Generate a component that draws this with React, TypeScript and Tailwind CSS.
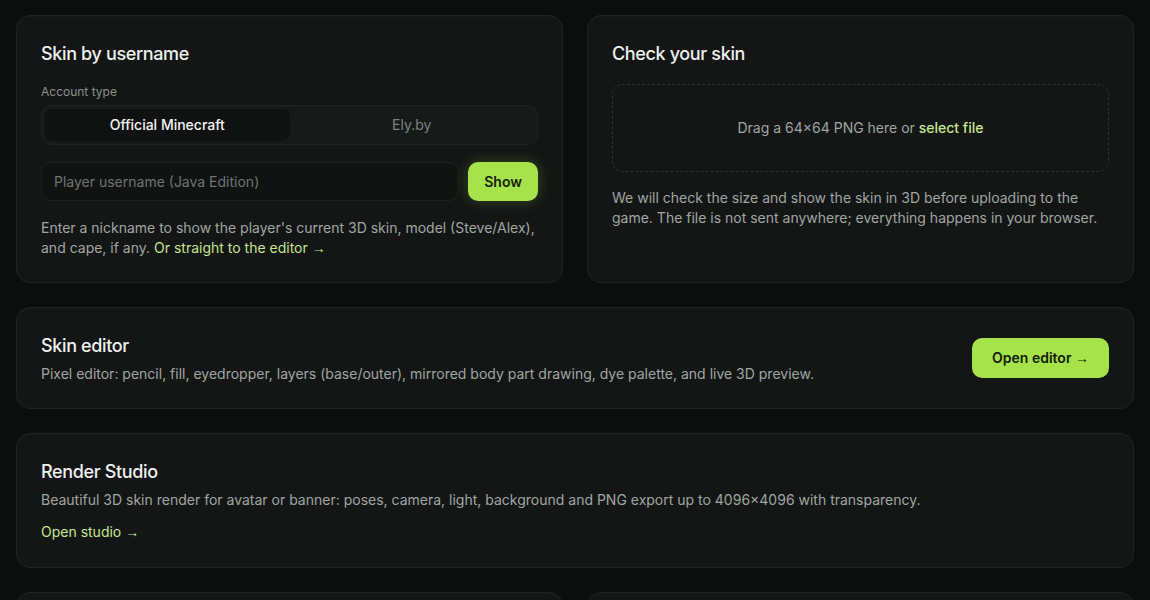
import { useState } from 'react';

function Card({ children, className = '' }: { children?: React.ReactNode; className?: string }) {
  return (
    <div className={`rounded-[14px] border border-[#1f2422] bg-[#131615] px-6 pt-6 shadow-[0_1px_0_rgba(255,255,255,0.02)_inset] ${className}`}>
      {children}
    </div>
  );
}

function Arrow() {
  return <span className="font-['Liberation_Sans',sans-serif] text-[14px]">→</span>;
}

export default function App() {
  const [account, setAccount] = useState<'mojang' | 'ely'>('mojang');

  return (
    <div className="min-h-screen bg-[#0c0e0d] text-[#eef1ee] font-['Inter','Noto_Sans',sans-serif]">
      <div className="flex flex-col gap-6 px-4 py-[15px]">
        <div className="grid grid-cols-2 gap-6">
          {/* Skin by username */}
          <Card className="pb-6">
            <h2 className="text-lg font-medium leading-7 tracking-[-0.02em]">Skin by username</h2>
            <div className="mt-4 text-xs text-[#8b918d]">Account type</div>
            <div className="mt-[5px] grid h-10 grid-cols-2 rounded-[10px] border border-[#1f2422] bg-[#161a18] p-[3px]">
              <button
                onClick={() => setAccount('mojang')}
                className={`rounded-lg text-sm font-medium ${account === 'mojang' ? 'bg-[#0f1211] text-[#f2f4f2]' : 'text-[#7d837f]'}`}
              >
                Official Minecraft
              </button>
              <button
                onClick={() => setAccount('ely')}
                className={`rounded-lg text-sm ${account === 'ely' ? 'bg-[#0f1211] font-medium text-[#f2f4f2]' : 'text-[#7d837f]'}`}
              >
                Ely.by
              </button>
            </div>
            <div className="mt-[17px] flex gap-[9px]">
              <input
                placeholder="Player username (Java Edition)"
                className="h-[39px] flex-1 rounded-[10px] border border-[#1d2220] bg-[#101312] px-3 text-sm text-[#e6e9e6] outline-none placeholder:text-[#6f7571]"
              />
              <button className="h-[39px] rounded-[10px] bg-[#a6e34a] px-4 text-sm font-semibold text-[#132006] shadow-[0_0_14px_rgba(166,227,74,0.25)]">
                Show
              </button>
            </div>
            <p className="mt-[17px] text-sm leading-5 text-[#a0a6a2]">
              Enter a nickname to show the player's current 3D skin, model (Steve/Alex), and cape, if any.{' '}
              <a href="#" className="text-[#c6e58f]">Or straight to the editor <Arrow /></a>
            </p>
          </Card>

          {/* Check your skin */}
          <Card className="pb-6">
            <h2 className="text-lg font-medium leading-7 tracking-[-0.02em]">Check your skin</h2>
            <div className="mt-4 flex h-[88px] items-center justify-center rounded-[10px] border border-dashed border-[#2c322f] text-sm text-[#a0a6a2]">
              <span>
                Drag a 64×64 PNG here or <span className="font-medium text-[#c6e58f]">select file</span>
              </span>
            </div>
            <p className="mt-4 text-sm leading-5 text-[#a0a6a2]">
              We will check the size and show the skin in 3D before uploading to the game. The file is not sent anywhere; everything happens in your browser.
            </p>
          </Card>
        </div>

        {/* Skin editor */}
        <Card className="flex items-center justify-between pb-6">
          <div>
            <h2 className="text-lg font-medium leading-7 tracking-[-0.02em]">Skin editor</h2>
            <p className="mt-1 text-sm leading-5 text-[#a0a6a2]">
              Pixel editor: pencil, fill, eyedropper, layers (base/outer), mirrored body part drawing, dye palette, and live 3D preview.
            </p>
          </div>
          <button className="h-10 w-[137px] rounded-[10px] bg-[#a6e34a] text-sm font-semibold text-[#132006]">
            Open editor <Arrow />
          </button>
        </Card>

        {/* Render Studio */}
        <Card className="pb-6">
          <h2 className="text-lg font-medium leading-7 tracking-[-0.02em]">Render Studio</h2>
          <p className="mt-1 text-sm leading-5 text-[#a0a6a2]">
            Beautiful 3D skin render for avatar or banner: poses, camera, light, background and PNG export up to 4096×4096 with transparency.
          </p>
          <a href="#" className="mt-3 inline-block text-sm leading-5 text-[#c6e58f]">Open studio <Arrow /></a>
        </Card>

        <div className="grid grid-cols-2 gap-6">
          <Card className="h-40" />
          <Card className="h-40" />
        </div>
      </div>
    </div>
  );
}
